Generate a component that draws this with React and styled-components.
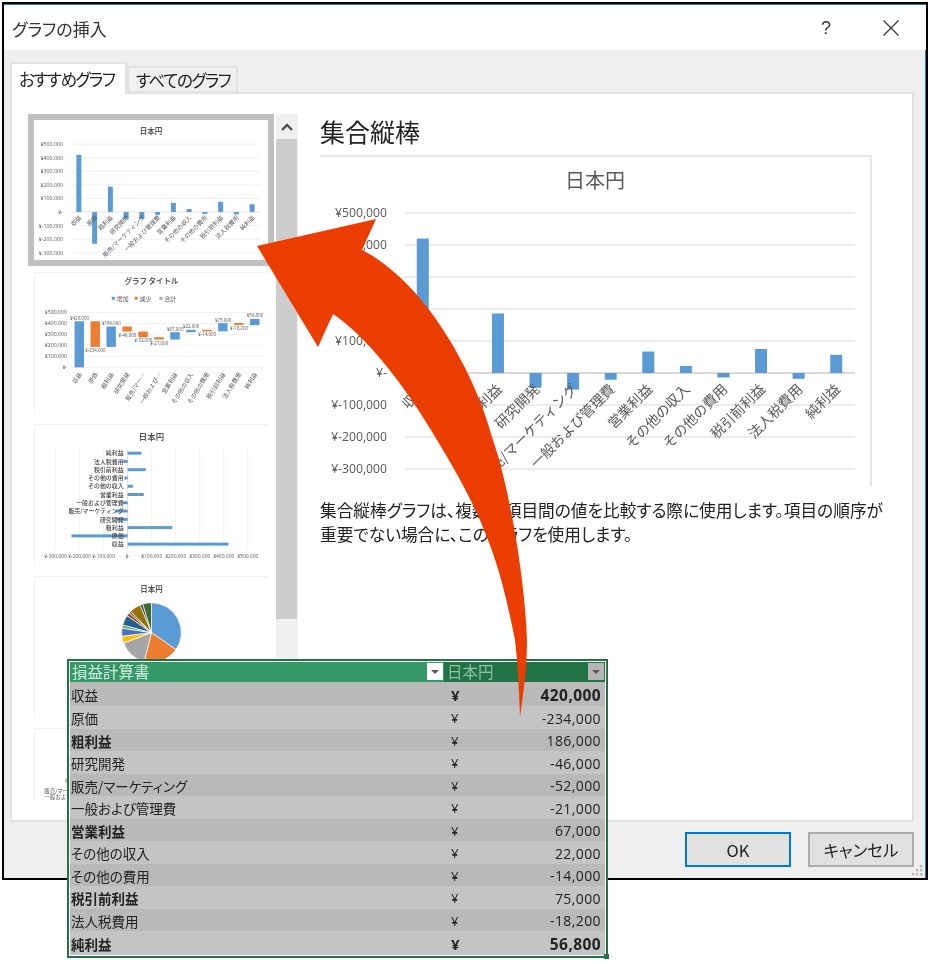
import React from "react";
import styled, { createGlobalStyle } from "styled-components";

const JP = `"Noto Sans CJK JP", "Noto Sans", sans-serif`;
const NUM = `"Open Sans", "Noto Sans CJK JP", sans-serif`;

const VALUES = [420000, -234000, 186000, -46000, -52000, -21000, 67000, 22000, -14000, 75000, -18200, 56800];
const LABELS = ["収益", "原価", "粗利益", "研究開発", "販売/マーケティング", "一般および管理費", "営業利益", "その他の収入", "その他の費用", "税引前利益", "法人税費用", "純利益"];
const BOLD = [false, false, true, false, false, false, true, false, false, true, false, true];
const BOLDNUM = [true, false, false, false, false, false, false, false, false, false, false, true];
const PIE = ["#5b9bd5", "#ed7d31", "#a5a5a5", "#ffc000", "#4472c4", "#70ad47", "#255e91", "#9e480e", "#636363", "#997300", "#264478", "#43682b"];

const yen = (v) => (v === 0 ? "¥-" : `¥${v.toLocaleString("en-US")}`);

const GlobalStyle = createGlobalStyle`
  html, body { margin: 0; padding: 0; background: #fff; }
  body { font-family: ${JP}; font-feature-settings: "palt"; color: #222; }
`;

const Page = styled.div`
  position: relative;
  width: 932px;
  height: 964px;
  overflow: hidden;
  box-sizing: border-box;
  padding: 2px 0 0 2px;
  filter: blur(0.3px);
`;
const Dialog = styled.div`
  position: relative;
  width: 926px;
  height: 878px;
  box-sizing: border-box;
  border: 2px solid #000;
  display: flex;
  flex-direction: column;
  background: #fff;
`;
const TitleBar = styled.div`
  height: 46px;
  flex: none;
  box-sizing: border-box;
  border-top: 1px solid #2b7cc0;
  display: flex;
  align-items: center;
  padding-left: 8px;
  padding-top: 1px;
`;
const DialogTitle = styled.div`
  flex: 1;
  font-size: 17px;
  color: #333;
`;
const HelpMark = styled.div`
  width: 60px;
  margin-right: 2px;
  font-family: "Liberation Sans", sans-serif;
  font-size: 18px;
  color: #333;
  text-align: left;
`;
const CloseMark = styled.svg`
  width: 16px;
  height: 16px;
  margin-right: 27px;
`;
const Body = styled.div`
  flex: 1;
  min-height: 0;
  background: #efefef;
  border-right: 1px solid #2b7cc0;
  padding: 12px 11px 0 6px;
  display: flex;
  flex-direction: column;
`;
const TabRow = styled.div`
  display: flex;
  align-items: flex-end;
  height: 32px;
  margin-bottom: -2px;
  position: relative;
  z-index: 1;
`;
const Tab = styled.div`
  box-sizing: border-box;
  height: ${(p) => (p.$active ? "32px" : "27px")};
  width: ${(p) => (p.$active ? "117px" : "111px")};
  padding-left: ${(p) => (p.$active ? "7px" : "7px")};
  margin-bottom: ${(p) => (p.$active ? "0" : "1px")};
  display: flex;
  align-items: center;
  white-space: nowrap;
  font-size: 16.5px;
  letter-spacing: -1.4px;
  color: #222;
  background: ${(p) => (p.$active ? "#fff" : "#f0f0f0")};
  border: 2px solid #e2e2e2;
  border-bottom: ${(p) => (p.$active ? "none" : "2px solid #e2e2e2")};
`;
const Panel = styled.div`
  height: 730px;
  flex: none;
  box-sizing: border-box;
  border: 2px solid #e0e0e0;
  background: #fff;
  display: flex;
  padding: 20px 0 0 16px;
`;
const ThumbList = styled.div`
  width: 246px;
  height: 686px;
  overflow: hidden;
  flex: none;
`;
const ThumbItem = styled.div`
  box-sizing: border-box;
  width: 246px;
  height: 152px;
  border: 6px solid ${(p) => (p.$selected ? "#bfbfbf" : "transparent")};
`;
const ThumbCard = styled.svg`
  display: block;
  width: 234px;
  height: 140px;
  border-top: ${(p) => (p.$selected ? "none" : "1px solid #f0f0f0")};
  border-left: ${(p) => (p.$selected ? "none" : "1px solid #f0f0f0")};
  box-sizing: border-box;
  filter: blur(0.5px);
`;
const ScrollBar = styled.div`
  width: 22px;
  height: 686px;
  margin-left: 2px;
  flex: none;
  background: #f0f0f0;
  display: flex;
  flex-direction: column;
`;
const ScrollUp = styled.div`
  height: 25px;
  display: flex;
  align-items: center;
  justify-content: center;
`;
const ScrollThumb = styled.div`
  height: 480px;
  width: 21px;
  background: #cdcdcd;
`;
const Detail = styled.div`
  margin-left: 22px;
  width: 570px;
`;
const Heading = styled.div`
  font-size: 25px;
  line-height: 34px;
  color: #222;
  margin-bottom: 7px;
`;
const ChartFrame = styled.div`
  width: 552px;
  height: 331px;
  box-sizing: border-box;
  border-top: 2px solid #e6e6e6;
  border-right: 2px solid #e6e6e6;
`;
const BigChart = styled.svg`
  display: block;
  width: 550px;
  height: 329px;
  margin-top: -2px;
  overflow: visible;
`;
const Description = styled.p`
  margin: 12px 0 0;
  width: 568px;
  font-size: 16.7px;
  line-height: 24px;
  color: #222;
`;
const Footer = styled.div`
  display: flex;
  justify-content: flex-end;
  gap: 17px;
  padding-top: 10px;
`;
const Button = styled.div`
  box-sizing: border-box;
  width: 106px;
  height: 35px;
  display: flex;
  align-items: center;
  justify-content: center;
  background: #e1e1e1;
  border: 2px solid ${(p) => (p.$primary ? "#0078d7" : "#adadad")};
  font-size: 16.5px;
  color: #222;
`;
const Grip = styled.svg`
  position: absolute;
  right: 2px;
  bottom: 1px;
  width: 13px;
  height: 13px;
`;
const ChartText = styled.text`
  font-family: ${(p) => (p.$num ? NUM : JP)};
  font-size: ${(p) => p.$size}px;
  font-weight: ${(p) => p.$weight || 400};
  fill: ${(p) => p.$color || "#595959"};
  font-feature-settings: normal;
`;
const Sheet = styled.div`
  position: absolute;
  left: 67px;
  top: 659px;
  width: 541px;
  height: 299px;
  box-sizing: border-box;
  border: 2px solid #217346;
  outline: 1px solid #fff;
  outline-offset: -3px;
  padding: 1px;
  display: flex;
  flex-direction: column;
`;
const SheetHead = styled.div`
  height: 20px;
  flex: none;
  display: grid;
  grid-template-columns: 374px 1fr;
`;
const HeadCell = styled.div`
  position: relative;
  background: ${(p) => (p.$dark ? "#217346" : "#339966")};
  color: ${(p) => (p.$dark ? "#8fc2a5" : "#d5f0e0")};
  font-size: 15.5px;
  line-height: 18px;
  padding-left: ${(p) => (p.$dark ? "3px" : "2px")};
`;
const FilterButton = styled.span`
  position: absolute;
  right: 1px;
  top: 1px;
  width: 16px;
  height: 17px;
  background: ${(p) => (p.$dark ? "#b5b5b5" : "#fff")};
  display: flex;
  align-items: center;
  justify-content: center;
  &::after {
    content: "";
    border-left: 4px solid transparent;
    border-right: 4px solid transparent;
    border-top: 4px solid #555;
  }
`;
const SheetRow = styled.div`
  flex: 1;
  display: grid;
  grid-template-columns: 380px 24px 1fr;
  align-items: center;
  background: ${(p) => (p.$odd ? "#c4c4c4" : "#b9b9b9")};
  color: #222;
  padding: 2px 4px 0 1px;
  font-weight: ${(p) => (p.$bold ? 700 : 400)};
  font-size: 13.5px;
`;
const YenCell = styled.span`
  font-family: ${NUM};
  font-size: ${(p) => (p.$bold ? "15px" : "13px")};
  font-weight: ${(p) => (p.$bold ? 700 : 400)};
`;
const AmountCell = styled.span`
  font-family: ${NUM};
  text-align: right;
  font-size: ${(p) => (p.$bold ? "15.5px" : "14px")};
  letter-spacing: 0.4px;
  font-weight: ${(p) => (p.$bold ? 700 : 400)};
`;
const SheetHandle = styled.span`
  position: absolute;
  right: -3px;
  bottom: -3px;
  width: 5px;
  height: 5px;
  background: #217346;
`;
const ArrowLayer = styled.svg`
  position: absolute;
  left: 0;
  top: 0;
  width: 932px;
  height: 964px;
  pointer-events: none;
`;

function ColumnChart({ g }) {
  const cat = (g.right - g.left) / 12;
  const levels = [5, 4, 3, 2, 1, 0, -1, -2, -3];
  return (
    <>
      <ChartText x={g.titleX} y={g.titleY} $size={g.titleSize} $weight={g.titleWeight} textAnchor="middle">日本円</ChartText>
      {levels.map((l) => (
        <g key={l}>
          <line x1={g.left} x2={g.right} y1={g.zero - l * g.step} y2={g.zero - l * g.step} stroke={l === 0 ? "#d9d9d9" : "#ececec"} strokeWidth={g.grid} />
          <ChartText $num x={g.axisX} y={g.zero - l * g.step + g.axisSize * 0.36} $size={g.axisSize} textAnchor="end">{yen(l * 100000)}</ChartText>
        </g>
      ))}
      {VALUES.map((v, i) => {
        const cx = g.left + cat * (i + 0.5);
        const h = (Math.abs(v) / 100000) * g.step;
        return <rect key={i} x={cx - g.barW / 2} y={v > 0 ? g.zero - h : g.zero} width={g.barW} height={h} fill="#5b9bd5" />;
      })}
      {LABELS.map((t, i) => {
        const x = g.left + cat * (i + 0.5) + g.labelDx;
        const y = g.zero + g.labelDy;
        return <ChartText key={t} x={x} y={y} $size={g.labelSize} textAnchor="end" transform={`rotate(-45 ${x} ${y})`}>{t}</ChartText>;
      })}
    </>
  );
}

function Waterfall() {
  const zero = 95;
  const k = 0.1105 / 1000;
  let run = 0;
  const short = ["収益", "原価", "粗利益", "研究開発", "販売/マー…", "一般および…", "営業利益", "その他の収入", "その他の費用", "税引前利益", "法人税費用", "純利益"];
  return (
    <>
      <ChartText x={117} y={11} $size={7.5} $weight={700} textAnchor="middle">グラフ タイトル</ChartText>
      {[["#5b9bd5", 77, "増加"], ["#ed7d31", 100, "減少"], ["#a5a5a5", 125, "合計"]].map(([c, x, t]) => (
        <g key={t}>
          <rect x={x} y={24} width={3} height={3} fill={c} />
          <ChartText x={x + 5} y={28} $size={6}>{t}</ChartText>
        </g>
      ))}
      {[5, 4, 3, 2, 1, 0].map((l) => (
        <g key={l}>
          <line x1={36} x2={231} y1={zero - l * 11.05} y2={zero - l * 11.05} stroke="#eeeeee" strokeWidth="0.8" />
          <ChartText $num x={32} y={zero - l * 11.05 + 2} $size={5.3} textAnchor="end">{yen(l * 100000)}</ChartText>
        </g>
      ))}
      {VALUES.map((v, i) => {
        const from = run;
        run += v;
        const top = zero - Math.max(from, run) * k;
        const h = Math.abs(v) * k;
        const x = 39.5 + i * 16.07;
        return (
          <g key={i}>
            <rect x={x} y={top} width={9.5} height={h} fill={v > 0 ? "#5b9bd5" : "#ed7d31"} />
            <ChartText $num x={x + 5} y={v > 0 ? top - 1.5 : top + h + 5} $size={4.5} textAnchor="middle">{yen(v)}</ChartText>
          </g>
        );
      })}
      {short.map((t, i) => {
        const x = 47 + i * 16.07;
        return <ChartText key={t} x={x} y={102} $size={6} textAnchor="end" transform={`rotate(-58 ${x} 102)`}>{t}</ChartText>;
      })}
    </>
  );
}

function BarChart() {
  const zero = 93;
  const unit = 24.2;
  return (
    <>
      <ChartText x={117} y={15} $size={8.5} $weight={700} textAnchor="middle">日本円</ChartText>
      {[-3, -2, -1, 0, 1, 2, 3, 4, 5].map((l) => (
        <g key={l}>
          <line x1={zero + l * unit} x2={zero + l * unit} y1={24} y2={125} stroke={l === 0 ? "#d0d0d0" : "#eeeeee"} strokeWidth="0.8" />
          <ChartText $num x={zero + l * unit} y={134} $size={5} textAnchor="middle">{yen(l * 100000)}</ChartText>
        </g>
      ))}
      {VALUES.map((v, i) => {
        const y = 120 - i * 8.33;
        const w = (Math.abs(v) / 100000) * unit;
        return <rect key={i} x={v > 0 ? zero : zero - w} y={y - 1.5} width={w} height={3} fill="#5b9bd5" />;
      })}
      {LABELS.map((t, i) => (
        <ChartText key={t} x={zero - 4} y={120 - i * 8.33 + 2.2} $size={6} $weight={500} $color="#444" textAnchor="end">{t}</ChartText>
      ))}
    </>
  );
}

function PieChart() {
  const cx = 117;
  const cy = 56;
  const r = 30;
  const total = VALUES.reduce((a, b) => a + Math.abs(b), 0);
  let angle = -Math.PI / 2;
  return (
    <>
      <ChartText x={117} y={15} $size={7.5} $weight={700} textAnchor="middle">日本円</ChartText>
      {VALUES.map((v, i) => {
        const a0 = angle;
        angle += (Math.abs(v) / total) * Math.PI * 2;
        const large = angle - a0 > Math.PI ? 1 : 0;
        const d = `M${cx} ${cy}L${cx + r * Math.cos(a0)} ${cy + r * Math.sin(a0)}A${r} ${r} 0 ${large} 1 ${cx + r * Math.cos(angle)} ${cy + r * Math.sin(angle)}Z`;
        return <path key={i} d={d} fill={PIE[i]} stroke="#fff" strokeWidth="0.7" />;
      })}
    </>
  );
}

const mainG = { left: 84, right: 535, zero: 218, step: 32, barW: 12, grid: 2, axisX: 67, axisSize: 12.2, labelSize: 14, labelDx: 5, labelDy: 17, titleX: 275, titleY: 33, titleSize: 20 };
const thumbG = { left: 37, right: 226, zero: 92, step: 13.6, barW: 5, grid: 0.8, axisX: 29, axisSize: 5.3, labelSize: 6, labelDx: 3, labelDy: 6, titleX: 117, titleY: 14, titleSize: 7.5, titleWeight: 700 };

export default function App() {
  return (
    <Page>
      <GlobalStyle />
      <Dialog>
        <TitleBar>
          <DialogTitle>グラフの挿入</DialogTitle>
          <HelpMark>?</HelpMark>
          <CloseMark viewBox="0 0 16 16"><path d="M0.5 0.5L15.5 15.5M15.5 0.5L0.5 15.5" stroke="#333" strokeWidth="1.2" fill="none" /></CloseMark>
        </TitleBar>
        <Body>
          <TabRow>
            <Tab $active>おすすめグラフ</Tab>
            <Tab>すべてのグラフ</Tab>
          </TabRow>
          <Panel>
            <ThumbList>
              <ThumbItem $selected><ThumbCard $selected viewBox="0 0 234 140"><ColumnChart g={thumbG} /></ThumbCard></ThumbItem>
              <ThumbItem><ThumbCard viewBox="0 0 234 140"><Waterfall /></ThumbCard></ThumbItem>
              <ThumbItem><ThumbCard viewBox="0 0 234 140"><BarChart /></ThumbCard></ThumbItem>
              <ThumbItem><ThumbCard viewBox="0 0 234 140"><PieChart /></ThumbCard></ThumbItem>
              <ThumbItem>
                <ThumbCard viewBox="0 0 234 140">
                  <rect x="30" y="50" width="2" height="4" fill="#bbb" />
                  <ChartText x={9} y={64} $size={5.5}>販売/マー</ChartText>
                  <ChartText x={9} y={71} $size={5.5}>一般およ</ChartText>
                </ThumbCard>
              </ThumbItem>
            </ThumbList>
            <ScrollBar>
              <ScrollUp>
                <svg width="12" height="8" viewBox="0 0 12 8"><path d="M1 7L6 2L11 7" stroke="#505050" strokeWidth="2.4" fill="none" /></svg>
              </ScrollUp>
              <ScrollThumb />
            </ScrollBar>
            <Detail>
              <Heading>集合縦棒</Heading>
              <ChartFrame>
                <BigChart viewBox="0 0 550 329"><ColumnChart g={mainG} /></BigChart>
              </ChartFrame>
              <Description>集合縦棒グラフは、複数の項目間の値を比較する際に使用します。項目の順序が重要でない場合に、このグラフを使用します。</Description>
            </Detail>
          </Panel>
          <Footer>
            <Button $primary>OK</Button>
            <Button>キャンセル</Button>
          </Footer>
        </Body>
        <Grip viewBox="0 0 13 13">
          {[[9, 1], [5, 5], [9, 5], [1, 9], [5, 9], [9, 9]].map(([x, y]) => (
            <rect key={`${x}-${y}`} x={x} y={y} width="2.4" height="2.4" fill="#b8b8b8" />
          ))}
        </Grip>
      </Dialog>
      <Sheet>
        <SheetHead>
          <HeadCell>損益計算書<FilterButton /></HeadCell>
          <HeadCell $dark>日本円<FilterButton $dark /></HeadCell>
        </SheetHead>
        {LABELS.map((t, i) => (
          <SheetRow key={t} $odd={i % 2 === 1} $bold={BOLD[i]}>
            <span>{t}</span>
            <YenCell $bold={BOLDNUM[i]}>¥</YenCell>
            <AmountCell $bold={BOLDNUM[i]}>{VALUES[i].toLocaleString("en-US")}</AmountCell>
          </SheetRow>
        ))}
        <SheetHandle />
      </Sheet>
      <ArrowLayer viewBox="0 0 932 964">
        <path d="M257 246L376 219L362 250C425 282 475 372 493 440C510 490 525 580 527 640C527 670 523 695 520 717C519 690 518 665 515 640C508 605 500 570 488 540C475 505 458 475 437 440C405 385 365 335 333 314L318 347Z" fill="#ec3d00" />
      </ArrowLayer>
    </Page>
  );
}
